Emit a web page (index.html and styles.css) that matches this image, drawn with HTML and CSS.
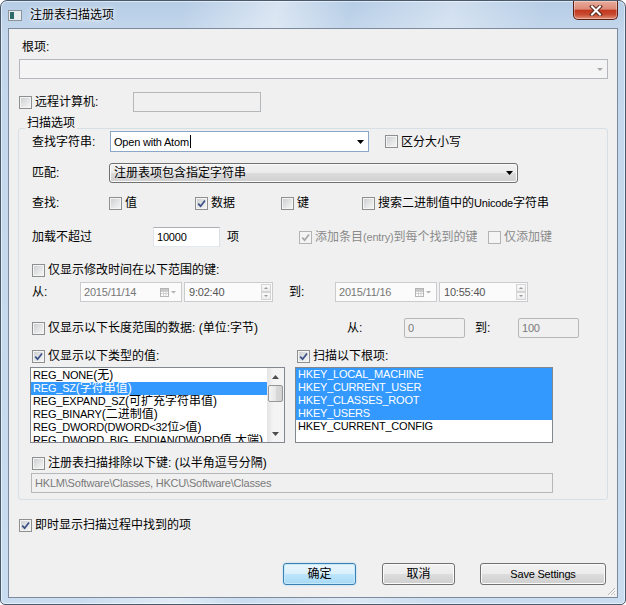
FILE: index.html
```html
<!DOCTYPE html>
<html lang="zh-CN">
<head>
    <meta charset="UTF-8">
    <title>注册表扫描选项</title>
    <link rel="stylesheet" href="styles.css">
</head>
<body>
<div class="window">
    <div class="titlebar">
        <svg class="app-icon" width="14" height="11" viewBox="0 0 14 11"><rect x="0.5" y="0.5" width="13" height="10" fill="#e9edf0" stroke="#8c959c"/><rect x="2" y="2" width="4" height="7" fill="#2f6a6a"/></svg>
        <span class="title">注册表扫描选项</span>
        <div class="close">
            <svg width="14" height="11" viewBox="0 0 14 11"><path d="M3 1.5 L11 9.5 M11 1.5 L3 9.5" stroke="#5a2a22" stroke-width="4" stroke-linecap="square"/><path d="M3 1.5 L11 9.5 M11 1.5 L3 9.5" stroke="#fff" stroke-width="2" stroke-linecap="square"/></svg>
        </div>
    </div>

    <div class="client">
        <div class="root-label">根项:</div>
        <div class="combo disabled root-combo">
            <svg class="arrow" width="6" height="3" viewBox="0 0 6 3"><path d="M0 0 H6 L3 3 Z" fill="#a9a9a9"/></svg>
        </div>

        <div class="row remote-row">
            <label class="check w114"><span class="box"></span>远程计算机:</label>
            <div class="textbox disabled remote-box"></div>
        </div>

        <div class="group">
            <div class="group-title">扫描选项</div>

            <div class="row r1">
                <span class="lbl w78">查找字符串:</span>
                <div class="combo edit find-combo">
                    <span class="en">Open with Atom</span><span class="caret"></span>
                    <svg class="arrow" width="7" height="4" viewBox="0 0 7 4"><path d="M0 0 H7 L3.5 4 Z" fill="#000"/></svg>
                </div>
                <label class="check ml16"><span class="box"></span>区分大小写</label>
            </div>

            <div class="row r2">
                <span class="lbl w77">匹配:</span>
                <div class="combo button-combo match-combo">
                    <span>注册表项包含指定字符串</span>
                    <svg class="arrow" width="7" height="4" viewBox="0 0 7 4"><path d="M0 0 H7 L3.5 4 Z" fill="#000"/></svg>
                </div>
            </div>

            <div class="row r3">
                <span class="lbl w77">查找:</span>
                <label class="check w86"><span class="box"></span>值</label>
                <label class="check w86"><span class="box on"><svg width="11" height="11" viewBox="0 0 11 11"><path d="M2.2 5.6 L4.6 8.2 L9 2.4" fill="none" stroke="#3c4f86" stroke-width="1.7"/></svg></span>数据</label>
                <label class="check w81"><span class="box"></span>键</label>
                <label class="check"><span class="box"></span>搜索二进制值中的<span class="en">Unicode</span>字符串</label>
            </div>

            <div class="row r4">
                <span class="lbl w121">加载不超过</span>
                <div class="textbox count-box"><span class="en">10000</span></div>
                <span class="unit">项</span>
                <label class="check dim w189"><span class="box on"><svg width="11" height="11" viewBox="0 0 11 11"><path d="M2.2 5.6 L4.6 8.2 L9 2.4" fill="none" stroke="#a8a8a8" stroke-width="1.7"/></svg></span>添加条目<span class="en">(entry)</span>到每个找到的键</label>
                <label class="check dim"><span class="box"></span>仅添加键</label>
            </div>

            <div class="row r5">
                <label class="check"><span class="box"></span>仅显示修改时间在以下范围的键:</label>
            </div>

            <div class="row r6">
                <span class="lbl w48">从:</span>
                <div class="picker date">
                    <span class="en">2015/11/14</span>
                    <svg class="cal" width="16" height="9" viewBox="0 0 16 9"><rect x="0.5" y="0.5" width="8" height="8" fill="#fff" stroke="#b4b4b4"/><path d="M1 3.5 H8 M1 5.5 H8 M3.5 3 V8.5 M6 3 V8.5" stroke="#d0d0d0"/><rect x="1" y="1" width="7" height="2" fill="#c8c8c8"/><path d="M11 3 H16 L13.5 5.5 Z" fill="#b0b0b0"/></svg>
                </div>
                <div class="picker time">
                    <span class="en">9:02:40</span>
                    <span class="spin"><span class="up"></span><span class="down"></span></span>
                </div>
                <span class="lbl to-lbl">到:</span>
                <div class="picker date">
                    <span class="en">2015/11/16</span>
                    <svg class="cal" width="16" height="9" viewBox="0 0 16 9"><rect x="0.5" y="0.5" width="8" height="8" fill="#fff" stroke="#b4b4b4"/><path d="M1 3.5 H8 M1 5.5 H8 M3.5 3 V8.5 M6 3 V8.5" stroke="#d0d0d0"/><rect x="1" y="1" width="7" height="2" fill="#c8c8c8"/><path d="M11 3 H16 L13.5 5.5 Z" fill="#b0b0b0"/></svg>
                </div>
                <div class="picker time">
                    <span class="en">10:55:40</span>
                    <span class="spin"><span class="up"></span><span class="down"></span></span>
                </div>
            </div>

            <div class="row r7">
                <label class="check w315"><span class="box"></span>仅显示以下长度范围的数据: (单位:字节)</label>
                <span class="lbl w57">从:</span>
                <div class="textbox disabled len-box"><span class="en">0</span></div>
                <span class="lbl w43 ml10">到:</span>
                <div class="textbox disabled len-box"><span class="en">100</span></div>
            </div>

            <div class="row r8">
                <label class="check w265"><span class="box on"><svg width="11" height="11" viewBox="0 0 11 11"><path d="M2.2 5.6 L4.6 8.2 L9 2.4" fill="none" stroke="#3c4f86" stroke-width="1.7"/></svg></span>仅显示以下类型的值:</label>
                <label class="check"><span class="box on"><svg width="11" height="11" viewBox="0 0 11 11"><path d="M2.2 5.6 L4.6 8.2 L9 2.4" fill="none" stroke="#3c4f86" stroke-width="1.7"/></svg></span>扫描以下根项:</label>
            </div>

            <div class="row r9">
                <div class="listbox types">
                    <ul class="items">
                        <li><span class="en">REG_NONE</span>(无)</li>
                        <li class="sel"><span class="en">REG_SZ</span>(字符串值)</li>
                        <li><span class="en">REG_EXPAND_SZ</span>(可扩充字符串值)</li>
                        <li><span class="en">REG_BINARY</span>(二进制值)</li>
                        <li><span class="en">REG_DWORD(DWORD&lt;32</span>位<span class="en">&gt;</span>值)</li>
                        <li><span class="en">REG_DWORD_BIG_ENDIAN(DWORD</span>值,大端)</li>
                    </ul>
                    <div class="scrollbar">
                        <div class="sb-btn"><svg width="7" height="4" viewBox="0 0 7 4"><path d="M0 4 H7 L3.5 0 Z" fill="#4d4d4d"/></svg></div>
                        <div class="thumb"></div>
                        <div class="track"></div>
                        <div class="sb-btn"><svg width="7" height="4" viewBox="0 0 7 4"><path d="M0 0 H7 L3.5 4 Z" fill="#4d4d4d"/></svg></div>
                    </div>
                </div>
                <div class="listbox roots">
                    <ul class="items en">
                        <li class="sel">HKEY_LOCAL_MACHINE</li>
                        <li class="sel">HKEY_CURRENT_USER</li>
                        <li class="sel">HKEY_CLASSES_ROOT</li>
                        <li class="sel">HKEY_USERS</li>
                        <li>HKEY_CURRENT_CONFIG</li>
                    </ul>
                </div>
            </div>

            <div class="row r10">
                <label class="check"><span class="box"></span>注册表扫描排除以下键: (以半角逗号分隔)</label>
            </div>

            <div class="row r11">
                <div class="textbox disabled exclude-box"><span class="en">HKLM\Software\Classes, HKCU\Software\Classes</span></div>
            </div>
        </div>

        <div class="row instant-row">
            <label class="check"><span class="box on"><svg width="11" height="11" viewBox="0 0 11 11"><path d="M2.2 5.6 L4.6 8.2 L9 2.4" fill="none" stroke="#3c4f86" stroke-width="1.7"/></svg></span>即时显示扫描过程中找到的项</label>
        </div>

        <div class="row buttons">
            <button class="btn default ok">确定</button>
            <button class="btn cancel">取消</button>
            <button class="btn save"><span class="en">Save Settings</span></button>
        </div>

        <svg class="grip" width="10" height="10" viewBox="0 0 10 10"><path d="M9 2 L2 9 M9 5 L5 9 M9 8 L8 9" stroke="#b8b8b8" stroke-width="1"/><path d="M10 3 L3 10 M10 6 L6 10" stroke="#fff" stroke-width="1"/></svg>
    </div>
</div>
</body>
</html>
```

FILE: styles.css
```css
* {
    box-sizing: border-box;
}
body {
    margin: 0;
    background: #fff;
    font-family: "Liberation Sans", "Noto Sans CJK SC", sans-serif;
    font-size: 12px;
    line-height: 14px;
    color: #000;
}
ul {
    margin: 0;
    padding: 0;
    list-style: none;
}
.en {
    font-size: 11px;
    letter-spacing: -0.2px;
}

/* window frame */
.window {
    width: 626px;
    height: 605px;
    border: 1px solid #4a5a6d;
    border-radius: 7px 7px 5px 5px;
    padding: 0 7px 6px;
    background:
        linear-gradient(100deg, rgba(255,255,255,0) 25%, rgba(255,255,255,.45) 38%, rgba(255,255,255,0) 48%, rgba(255,255,255,.35) 62%, rgba(255,255,255,0) 75%),
        linear-gradient(180deg, #b6cde6 0%, #c3d6eb 30px, #cadcef 100%);
    box-shadow: inset 0 0 0 1px rgba(255,255,255,.55);
    display: flex;
    flex-direction: column;
}
.titlebar {
    height: 27px;
    display: flex;
    align-items: flex-start;
    flex-shrink: 0;
}
.app-icon {
    margin-top: 9px;
}
.title {
    margin: 7px 0 0 8px;
    text-shadow: 0 0 6px #fff, 0 0 3px #fff;
}
.close {
    margin-left: auto;
    width: 45px;
    height: 19px;
    border: 1px solid #5b1f16;
    border-top: none;
    border-radius: 0 0 5px 5px;
    background: linear-gradient(180deg, #e9ab9b 0%, #dc8a76 45%, #c2371f 52%, #c84a31 75%, #e09078 100%);
    box-shadow: inset 0 0 0 1px rgba(255,255,255,.35);
    display: flex;
    align-items: center;
    justify-content: center;
}

/* client area */
.client {
    position: relative;
    height: 570px;
    background: #f0f0f0;
    border: 1px solid #7b8a9c;
    padding: 0 10px;
}
.root-label {
    margin: 11px 0 0 3px;
}
.row {
    display: flex;
    align-items: center;
}
.lbl {
    flex-shrink: 0;
}
.check {
    display: flex;
    align-items: center;
    flex-shrink: 0;
    white-space: nowrap;
}
.check.dim {
    color: #8a8a8a;
}
.box {
    width: 13px;
    height: 13px;
    margin-right: 3px;
    border: 1px solid #8e8f8f;
    background: linear-gradient(135deg, #c9cbcd 0%, #e2e3e4 50%, #f8f8f8 100%);
    box-shadow: inset 0 0 0 1px #f4f4f4;
    flex-shrink: 0;
    display: flex;
}
.box svg {
    display: block;
}
.dim .box {
    border-color: #b3b3b3;
    background: #f4f4f4;
}

.w43 { width: 43px; }
.w48 { width: 48px; }
.w57 { width: 57px; }
.w77 { width: 77px; }
.w78 { width: 78px; }
.w81 { width: 81px; }
.w86 { width: 86px; }
.w114 { width: 114px; }
.w121 { width: 121px; }
.w189 { width: 189px; }
.w265 { width: 265px; }
.w315 { width: 315px; }
.ml10 { margin-left: 10px; }
.ml16 { margin-left: 16px; }

/* combos and text boxes */
.combo {
    height: 20px;
    display: flex;
    align-items: center;
    flex-shrink: 0;
}
.combo .arrow {
    margin-left: auto;
}
.root-combo {
    margin-top: 5px;
    width: 589px;
    border: 1px solid #b4b8bc;
    background: #f4f4f4;
    padding-right: 4px;
}
.find-combo {
    width: 259px;
    height: 21px;
    background: #fff;
    border: 1px solid #8aa7c8;
    padding: 0 4px 0 3px;
}
.caret {
    width: 1px;
    height: 13px;
    background: #000;
    margin-left: 1px;
}
.match-combo {
    width: 409px;
    border: 1px solid #707070;
    border-radius: 3px;
    padding: 0 4px;
}
.button-combo,
.btn {
    background: linear-gradient(180deg, #f2f2f2 0%, #ebebeb 50%, #dddddd 50%, #cfcfcf 100%);
    box-shadow: inset 0 0 0 1px #fbfbfb;
}
.textbox {
    height: 20px;
    background: #fff;
    border: 1px solid;
    border-color: #abadb3 #dbdfe6 #e3e9ef #e2e3ea;
    padding-left: 3px;
    display: flex;
    align-items: center;
    flex-shrink: 0;
}
.textbox.disabled {
    background: #f0f0f0;
    border-color: #b5b8bb;
    color: #7a7a7a;
}
.remote-row {
    margin-top: 13px;
    height: 20px;
}
.remote-box {
    width: 128px;
}

/* group box */
.group {
    margin: 16px 0 0 -1px;
    width: 590px;
    border: 1px solid #d5dfe5;
    border-radius: 3px;
    padding: 0 0 6px 13px;
}
.group-title {
    width: max-content;
    margin: -12px 0 0 -7px;
    padding: 0 2px;
    line-height: 12px;
    background: #f0f0f0;
}
.r1 { margin-top: 2px; height: 21px; }
.r2 { margin-top: 11px; height: 20px; }
.r3 { margin-top: 12px; height: 16px; }
.r4 { margin-top: 16px; height: 20px; }
.r5 { margin-top: 15px; height: 16px; }
.r6 { margin-top: 4px; height: 20px; }
.r7 { margin-top: 16px; height: 20px; }
.r8 { margin-top: 10px; height: 16px; }
.r9 { margin-top: 3px; height: 76px; margin-left: -2px; align-items: stretch; }
.r10 { margin-top: 12px; height: 16px; }
.r11 { margin-top: 2px; height: 20px; margin-left: -1px; }

.count-box {
    width: 67px;
}
.unit {
    width: 72px;
    margin-left: 7px;
    flex-shrink: 0;
}

/* date and time pickers */
.picker {
    height: 20px;
    background: #fbfbfb;
    border: 1px solid #c9cbce;
    color: #777;
    display: flex;
    align-items: center;
    padding-left: 3px;
    flex-shrink: 0;
}
.picker.date {
    width: 102px;
    padding-right: 5px;
}
.picker.time {
    width: 89px;
    margin-left: 2px;
    padding-left: 4px;
    padding-right: 1px;
    color: #555;
}
.picker .cal,
.picker .spin {
    margin-left: auto;
}
.spin {
    width: 10px;
    height: 16px;
    display: flex;
    flex-direction: column;
}
.spin span {
    flex: 1;
    border: 1px solid #d4d4d4;
    background: linear-gradient(#fafafa, #ececec);
    position: relative;
}
.spin span::after {
    content: "";
    position: absolute;
    left: 2px;
    border-left: 2px solid transparent;
    border-right: 2px solid transparent;
}
.spin .up::after {
    top: 2px;
    border-bottom: 2px solid #9a9a9a;
}
.spin .down::after {
    top: 2px;
    border-top: 2px solid #9a9a9a;
}
.to-lbl {
    width: 46px;
    margin-left: 16px;
}
.len-box {
    width: 61px;
    border-radius: 2px;
}

/* list boxes */
.listbox {
    background: #fff;
    border: 1px solid #828790;
    display: flex;
    overflow: hidden;
    flex-shrink: 0;
}
.listbox .items {
    flex: 1;
    overflow: hidden;
    line-height: 13px;
}
.listbox li {
    height: 13px;
    padding-left: 2px;
    white-space: nowrap;
    overflow: hidden;
}
.listbox li.sel {
    background: #3399ff;
    color: #fff;
}
.types {
    width: 255px;
}
.types .items {
    padding-top: 1px;
}
.roots {
    width: 258px;
    margin-left: 10px;
}
.scrollbar {
    width: 17px;
    display: flex;
    flex-direction: column;
    background: linear-gradient(90deg, #e4e4e4, #f4f4f4 40%, #f4f4f4);
}
.sb-btn {
    height: 17px;
    display: flex;
    align-items: center;
    justify-content: center;
    flex-shrink: 0;
}
.thumb {
    height: 17px;
    margin: 0 1px;
    border: 1px solid #979797;
    border-radius: 2px;
    background: linear-gradient(90deg, #f4f4f4, #e6e6e6 50%, #d8d8d8 51%, #d3d3d3);
    flex-shrink: 0;
}
.track {
    flex: 1;
}
.exclude-box {
    width: 522px;
}

/* bottom */
.instant-row {
    margin-top: 17px;
    height: 16px;
}
.buttons {
    margin-top: 30px;
    height: 22px;
}
.btn {
    height: 22px;
    border: 1px solid #707070;
    border-radius: 3px;
    font: inherit;
    color: #000;
    padding: 0;
}
.btn.default {
    border-color: #3c7fb1;
    background: linear-gradient(180deg, #eaf6fd 0%, #d9f0fc 50%, #bee6fd 50%, #a7d9f5 100%);
    box-shadow: inset 0 0 0 1px #c4e9fb, 0 0 2px #9ed5f5;
}
.ok {
    width: 73px;
    margin-left: 264px;
}
.cancel {
    width: 73px;
    margin-left: 26px;
}
.save {
    width: 126px;
    margin-left: 25px;
}
.grip {
    position: absolute;
    right: 1px;
    bottom: 1px;
}
```
